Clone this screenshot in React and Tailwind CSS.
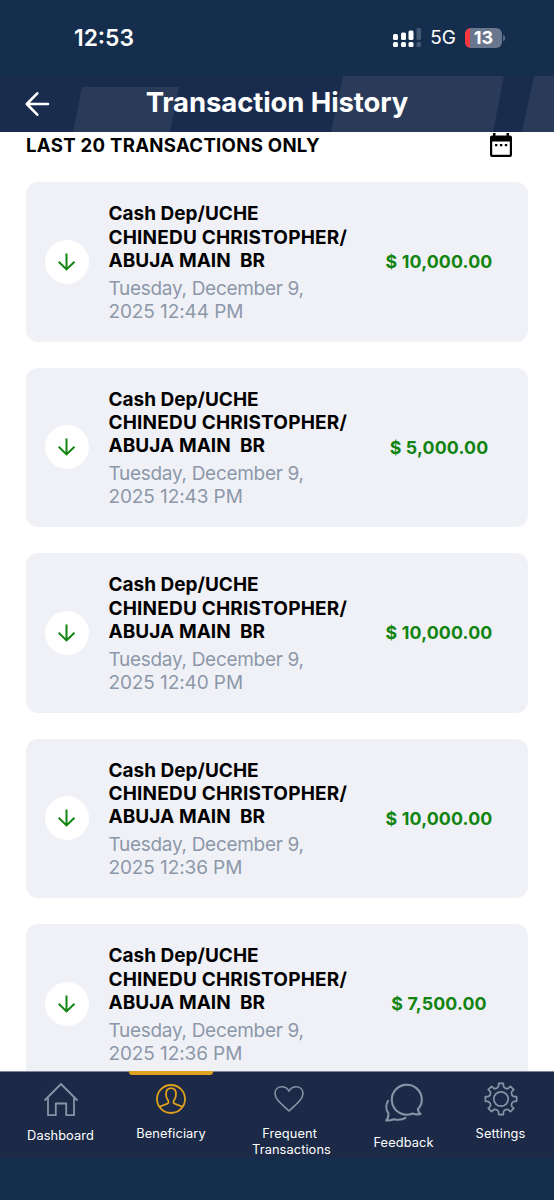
import React from "react";

const transactions = [
  { id: 1, amount: "$ 10,000.00", time: "12:44 PM" },
  { id: 2, amount: "$ 5,000.00", time: "12:43 PM" },
  { id: 3, amount: "$ 10,000.00", time: "12:40 PM" },
  { id: 4, amount: "$ 10,000.00", time: "12:36 PM" },
  { id: 5, amount: "$ 7,500.00", time: "12:36 PM" },
];

// 8 teeth around a 34x34 box
const gearPath = () => {
  const point = (radius, deg) => {
    const a = (deg * Math.PI) / 180;
    return `${(17 + radius * Math.cos(a)).toFixed(2)} ${(17 + radius * Math.sin(a)).toFixed(2)}`;
  };
  let d = "";
  for (let i = 0; i < 8; i++) {
    const c = i * 45;
    d += `${i === 0 ? "M" : "L"}${point(12.9, c - 11)} L${point(15.8, c - 8.5)} L${point(15.8, c + 8.5)} L${point(12.9, c + 11)} Q${point(10.6, c + 22.5)} ${point(12.9, c + 34)} `;
  }
  return d + "Z";
};

const StatusBar = () => (
  <div className="flex h-[76px] shrink-0 items-start justify-between bg-[#162e4d] pl-[74px] pr-[49px] pt-[24px] text-white">
    <span className="text-[22.8px] font-semibold leading-[28px]">12:53</span>
    <div className="flex h-[28px] items-center">
      <svg width="30" height="20" viewBox="0 0 30 20" fill="#fff">
        <rect x="1" y="6" width="5" height="6" rx="1.5" />
        <rect x="9" y="4.5" width="5" height="7.5" rx="1.5" />
        <rect x="16.5" y="2.5" width="5" height="9.5" rx="1.5" />
        <rect x="1" y="14" width="5" height="5" rx="1.5" />
        <rect x="9" y="14" width="5" height="5" rx="1.5" />
        <rect x="16.5" y="14" width="5" height="5" rx="1.5" />
        <rect x="24.5" y="0" width="4.5" height="12" rx="1.5" fill="#465a75" />
        <rect x="24.5" y="14" width="4.5" height="5" rx="1.5" fill="#465a75" />
      </svg>
      <span className="ml-[8px] text-[19px] leading-[28px]">5G</span>
      <div className="relative ml-[9px] flex h-[20px] w-[37px] items-center justify-center overflow-hidden rounded-[6px] bg-[#68778d]">
        <div className="absolute left-0 top-0 h-full w-[5px] bg-[#f8373f]" />
        <span className="text-[18px] font-bold leading-[20px]">13</span>
      </div>
      <div className="ml-[1px] h-[6px] w-[2px] rounded-r-full bg-[#5d6d84]" />
    </div>
  </div>
);

const Header = () => (
  <header className="relative flex h-[56px] shrink-0 items-center justify-center bg-[#192c4d] pb-[4px]">
    <svg className="absolute inset-0" width="554" height="56" viewBox="0 0 554 56" fill="#293b59">
      <path d="M82 11H179L170 56H73Z" />
      <path d="M343 0H504L493 56H331Z" />
      <path d="M534 0H554V56H522Z" />
    </svg>
    <svg
      className="absolute left-[24px] top-[15px]"
      width="27"
      height="26"
      viewBox="0 0 27 26"
      fill="none"
      stroke="#fff"
      strokeWidth="2.6"
      strokeLinecap="round"
      strokeLinejoin="round"
    >
      <path d="M24 13H2.8M13.3 2.3L2.8 13L13.3 23.7" />
    </svg>
    <h1 className="relative text-[27.5px] font-bold leading-[34px] tracking-[-0.1px] text-white">
      Transaction History
    </h1>
  </header>
);

const TransactionCard = ({ amount, time }) => (
  <div className="flex h-[159.5px] shrink-0 items-center rounded-[12px] bg-[#f0f1f7] pl-[19px]">
    <div className="flex h-[44px] w-[44px] shrink-0 items-center justify-center rounded-full bg-white">
      <svg width="20" height="20" viewBox="0 0 20 20" fill="none" stroke="#118411" strokeWidth="2">
        <path d="M9.5 1.5V17.5M1.7 9.8L9.5 17.4L17.5 9.8" />
      </svg>
    </div>
    <div className="ml-[19.5px] w-[250px] shrink-0 whitespace-pre pt-[2px]">
      <div className="text-[19px] font-[650] leading-[23.2px] text-black">
        <p>Cash Dep/UCHE</p>
        <p className="tracking-[0.18px]">CHINEDU CHRISTOPHER/</p>
        <p className="tracking-[0.05px]">{"ABUJA MAIN  BR"}</p>
      </div>
      <div className="mt-[4.5px] text-[19px] leading-[23.2px] text-[#8c98a9]">
        <p className="tracking-[-0.3px]">Tuesday, December 9,</p>
        <p className="tracking-[-0.1px]">2025 {time}</p>
      </div>
    </div>
    <div className="w-[161px] pt-[2px] text-center text-[17.8px] font-[650] tracking-[0.15px] text-[#118411]">
      {amount}
    </div>
  </div>
);

const NavItem = ({ label, className, labelClass, children }) => (
  <div className={`relative flex shrink-0 flex-col items-center ${className}`}>
    {children}
    <span
      className={`whitespace-pre text-center text-[12.8px] leading-[15.5px] tracking-[0.1px] text-white ${labelClass}`}
    >
      {label}
    </span>
  </div>
);

const BottomNav = () => (
  <nav className="h-[129px] shrink-0 border-t border-[#7c8599] bg-[#162e4d]">
    <div className="flex h-[86px] bg-[#1c2a47] pl-[4px]">
      <NavItem label="Dashboard" className="w-[113px]" labelClass="mt-[9.5px]">
        <svg className="mt-[10px]" width="36" height="36" viewBox="0 0 36 36" fill="none" stroke="#8894a6" strokeWidth="1.8" strokeLinejoin="round">
          <path d="M1.5 18.5L18 2L34.5 18.5M5 16V33.2H12.8V21.5H23.2V33.2H31V16" />
        </svg>
      </NavItem>

      <NavItem label="Beneficiary" className="w-[108px]" labelClass="mt-[11px]">
        <div className="absolute left-[12px] top-[-1px] h-[4px] w-[84px] rounded-b-[3px] bg-[#e0a21d]" />
        <svg className="mt-[11px]" width="32" height="32" viewBox="0 0 32 32" fill="none" stroke="#e0a21d" strokeWidth="1.8">
          <circle cx="16" cy="16" r="14" />
          <path d="M4.5 24C7 21.7 12.4 21.8 13.5 19.8C14 18.7 13.3 17.7 12.4 16.2C11.4 14.7 11 12.7 11 10.7C11 7.3 13 5.1 16 5.1S21 7.3 21 10.7C21 12.7 20.6 14.7 19.6 16.2C18.7 17.7 18 18.7 18.5 19.8C19.6 21.8 25 21.7 27.5 24" />
        </svg>
      </NavItem>

      <NavItem label={"Frequent \nTransactions"} className="w-[133px]" labelClass="mt-[11px]">
        <svg className="ml-[-5px] mt-[11px]" width="32" height="32" viewBox="0 0 32 32" fill="none" stroke="#8894a6" strokeWidth="1.6" strokeLinejoin="round">
          <path d="M16 28C10 22 2 17 2 10.2C2 6.3 5 3.7 9 3.7C12 3.7 14.5 5.2 16 8C17.5 5.2 20 3.7 23 3.7C27 3.7 30 6.3 30 10.2C30 17 22 22 16 28Z" />
        </svg>
      </NavItem>

      <NavItem label="Feedback" className="w-[91px]" labelClass="mt-[13px]">
        <svg className="mt-[10px]" width="40" height="40" viewBox="0 0 40 40" fill="none" stroke="#8894a6" strokeWidth="2.1" strokeLinecap="round" strokeLinejoin="round">
          <path d="M33.8 27.2C36.3 24.7 37.8 21.4 37.8 17.7A15 15 0 1 0 28.7 31.5C31.3 32.4 34 32.7 36.5 32C35 30.8 34.3 29 33.8 27.2Z" />
          <path d="M4.1 18.8C1.7 22.5 1.8 27.7 4.4 31.3C4.6 34 4 36.4 2.3 38.4C4.5 38.6 7.3 38.1 10 37.2C14 38.2 18.5 37.7 21.5 35.8" />
        </svg>
      </NavItem>

      <NavItem label="Settings" className="w-[103px]" labelClass="mt-[10px]">
        <svg className="mt-[10px]" width="34" height="34" viewBox="0 0 34 34" fill="none" stroke="#8894a6" strokeWidth="1.7" strokeLinejoin="round">
          <path d={gearPath()} />
          <circle cx="17" cy="17" r="7.2" />
        </svg>
      </NavItem>
    </div>
  </nav>
);

const App = () => {
  return (
    <div className="flex h-[1200px] w-[554px] flex-col overflow-hidden bg-white font-['Inter',sans-serif]">
      <StatusBar />
      <Header />

      <main className="flex min-h-0 flex-1 flex-col overflow-hidden px-[26px]">
        <div className="flex h-[50px] shrink-0 items-start justify-between pr-[15px]">
          <h2 className="mt-[1px] text-[18.6px] font-[650] leading-[24px] tracking-[0.28px] text-black">
            LAST 20 TRANSACTIONS ONLY
          </h2>
          <svg width="24" height="26" viewBox="0 0 24 26">
            <path
              fill="#000"
              fillRule="evenodd"
              d="M4 1H6.5V3.5H17.5V1H20V3.5H21Q23 3.5 23 5.5V23Q23 25 21 25H3Q1 25 1 23V5.5Q1 3.5 3 3.5H4ZM3.2 9.5V22.8H20.8V9.5Z"
            />
            <path d="M6 12h2.4v2.2H6zM10.9 12h2.4v2.2h-2.4zM15.8 12h2.4v2.2h-2.4z" />
          </svg>
        </div>

        <div className="flex flex-col gap-[26px]">
          {transactions.map((item) => (
            <TransactionCard key={item.id} amount={item.amount} time={item.time} />
          ))}
        </div>
      </main>

      <BottomNav />
    </div>
  );
};

export default App;
